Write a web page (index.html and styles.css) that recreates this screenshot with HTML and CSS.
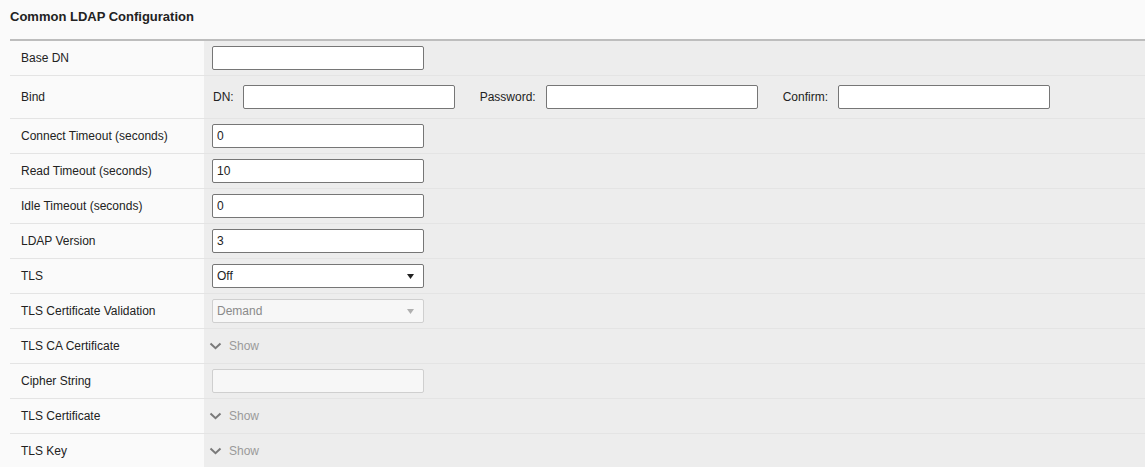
FILE: index.html
```html
<!DOCTYPE html>
<html>
<head>
<meta charset="utf-8">
<link rel="stylesheet" href="styles.css">
</head>
<body>
<div class="page">
  <div class="section-title">Common LDAP Configuration</div>
  <div class="form">
    <div class="row">
      <div class="label">Base DN</div>
      <div class="field"><input class="text" type="text" value=""></div>
    </div>
    <div class="row row-bind">
      <div class="label">Bind</div>
      <div class="field">
        <span class="sub-label">DN:</span><input class="text" type="text" value="">
        <span class="sub-label sub-gap">Password:</span><input class="text" type="password" value="">
        <span class="sub-label sub-gap">Confirm:</span><input class="text" type="password" value="">
      </div>
    </div>
    <div class="row">
      <div class="label">Connect Timeout (seconds)</div>
      <div class="field"><input class="text" type="text" value="0"></div>
    </div>
    <div class="row">
      <div class="label">Read Timeout (seconds)</div>
      <div class="field"><input class="text" type="text" value="10"></div>
    </div>
    <div class="row">
      <div class="label">Idle Timeout (seconds)</div>
      <div class="field"><input class="text" type="text" value="0"></div>
    </div>
    <div class="row">
      <div class="label">LDAP Version</div>
      <div class="field"><input class="text" type="text" value="3"></div>
    </div>
    <div class="row">
      <div class="label">TLS</div>
      <div class="field">
        <select class="select"><option>Off</option><option>On</option></select>
      </div>
    </div>
    <div class="row">
      <div class="label">TLS Certificate Validation</div>
      <div class="field">
        <select class="select" disabled><option>Demand</option></select>
      </div>
    </div>
    <div class="row">
      <div class="label">TLS CA Certificate</div>
      <div class="field"><span class="toggle"><svg class="chev" width="13" height="8" viewBox="0 0 13 8"><path d="M1.5 1.5 L6.5 6.2 L11.5 1.5" fill="none" stroke="#7a7a7a" stroke-width="2"/></svg>Show</span></div>
    </div>
    <div class="row">
      <div class="label">Cipher String</div>
      <div class="field"><input class="text" type="text" value="" disabled></div>
    </div>
    <div class="row">
      <div class="label">TLS Certificate</div>
      <div class="field"><span class="toggle"><svg class="chev" width="13" height="8" viewBox="0 0 13 8"><path d="M1.5 1.5 L6.5 6.2 L11.5 1.5" fill="none" stroke="#7a7a7a" stroke-width="2"/></svg>Show</span></div>
    </div>
    <div class="row">
      <div class="label">TLS Key</div>
      <div class="field"><span class="toggle"><svg class="chev" width="13" height="8" viewBox="0 0 13 8"><path d="M1.5 1.5 L6.5 6.2 L11.5 1.5" fill="none" stroke="#7a7a7a" stroke-width="2"/></svg>Show</span></div>
    </div>
  </div>
</div>
</body>
</html>
```
FILE: styles.css
```css
html, body {
  margin: 0;
  padding: 0;
  background: #fafafa;
}
body {
  font-family: "Liberation Sans", Arial, Helvetica, sans-serif;
  font-size: 12px;
  color: #222;
}
.page {
  padding-left: 10px;
}
.section-title {
  display: flex;
  align-items: center;
  font-weight: bold;
  font-size: 13px;
  color: #222;
  border-bottom: 2px solid #bdbdbd;
  box-sizing: border-box;
  height: 41px;
  padding-bottom: 7px;
}
.form {
  display: flex;
  flex-direction: column;
}
.row {
  display: grid;
  grid-template-columns: 194px 1fr;
  height: 35px;
  box-sizing: border-box;
  border-bottom: 1px solid #e4e4e4;
}
.row:last-child {
  border-bottom: none;
  height: 34px;
}
.row-bind {
  height: 43px;
}
.label {
  display: flex;
  align-items: center;
  padding-left: 11px;
  background: #fafafa;
  color: #222;
}
.field {
  display: flex;
  align-items: center;
  padding-left: 8px;
  background: #ededed;
}
.text {
  box-sizing: border-box;
  width: 212px;
  height: 24px;
  border: 1px solid #767676;
  border-radius: 2px;
  background: #fff;
  padding: 0 4px;
  font-family: "Liberation Sans", Arial, Helvetica, sans-serif;
  font-size: 12px;
  color: #222;
  outline: none;
  margin: 0;
}
.text:disabled {
  border-color: #cfcfcf;
  background: #f7f7f7;
}
.sub-label {
  padding-left: 1px;
  margin-right: 9px;
  color: #222;
}
.sub-gap {
  margin-left: 24px;
  margin-right: 10px;
}
.select {
  box-sizing: border-box;
  width: 212px;
  height: 24px;
  margin: 0;
  border: 1px solid #767676;
  border-radius: 2px;
  padding: 0 4px;
  font-family: "Liberation Sans", Arial, Helvetica, sans-serif;
  font-size: 12px;
  color: #222;
  -webkit-appearance: none;
  appearance: none;
  background: #fff url("data:image/svg+xml;utf8,<svg xmlns='http://www.w3.org/2000/svg' width='7' height='5'><path d='M0 0 L7 0 L3.5 5 Z' fill='%23222'/></svg>") no-repeat right 9px center;
  outline: none;
}
.select:disabled {
  border-color: #cfcfcf;
  color: #8a8a8a;
  background: #f7f7f7 url("data:image/svg+xml;utf8,<svg xmlns='http://www.w3.org/2000/svg' width='7' height='5'><path d='M0 0 L7 0 L3.5 5 Z' fill='%23b0b0b0'/></svg>") no-repeat right 9px center;
  opacity: 1;
}
.toggle {
  display: inline-flex;
  align-items: center;
  color: #9a9a9a;
  margin-left: -3px;
}
.chev {
  margin-right: 7px;
}
```
